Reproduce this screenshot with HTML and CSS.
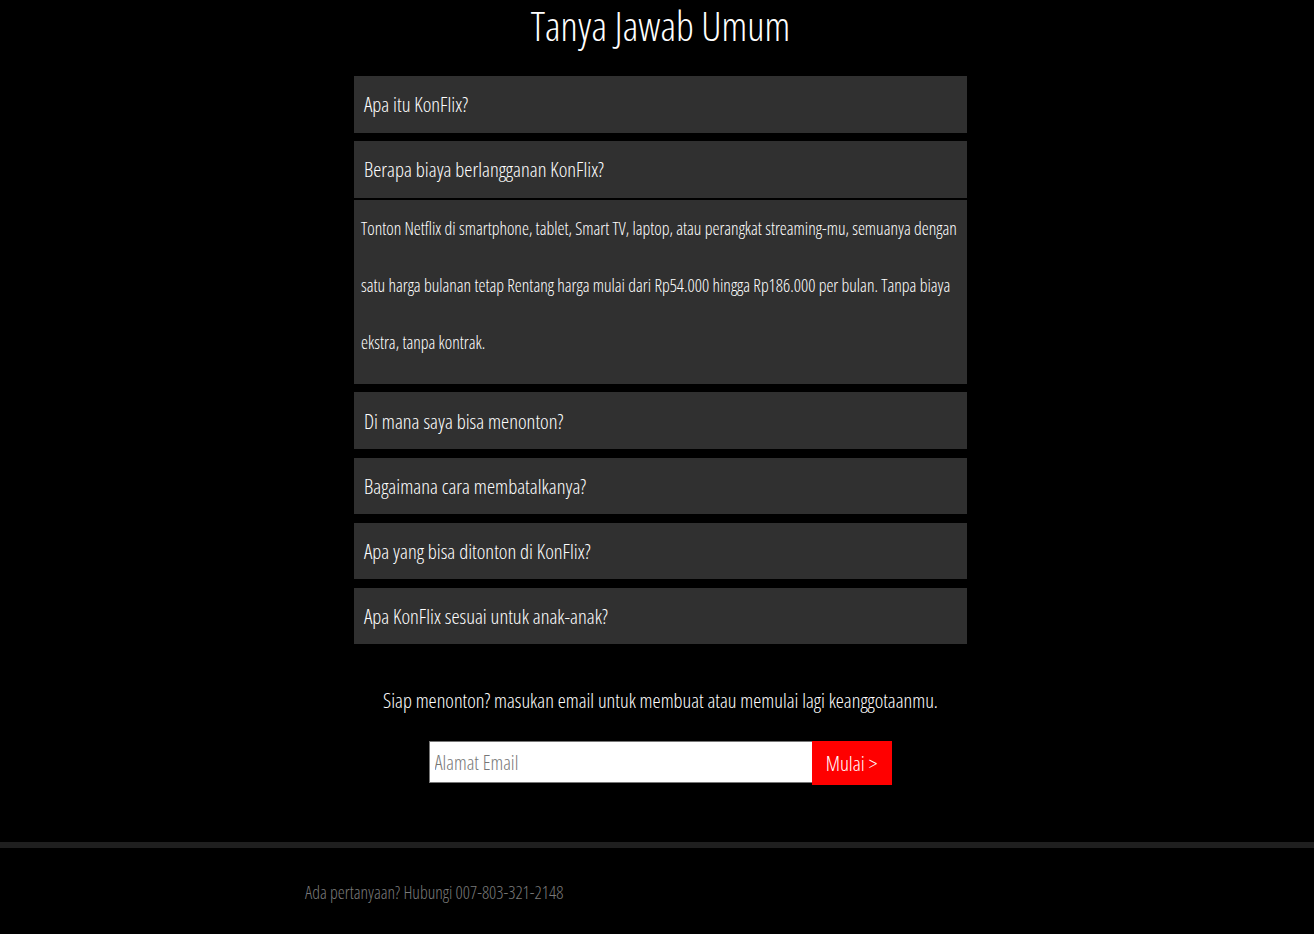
FILE: index.html
```html
<!DOCTYPE html>
<html lang="id">
<head>
<meta charset="utf-8">
<title>KonFlix - Tanya Jawab Umum</title>
<link rel="stylesheet" href="styles.css">
</head>
<body>
<section class="faq-section">
  <h1 class="faq-title">Tanya Jawab Umum</h1>
  <ul class="faq-list">
    <li class="faq-item"><div class="faq-q">Apa itu KonFlix?</div></li>
    <li class="faq-item open">
      <div class="faq-q">Berapa biaya berlangganan KonFlix?</div>
      <div class="faq-a">Tonton Netflix di smartphone, tablet, Smart TV, laptop, atau perangkat streaming-mu, semuanya dengan satu harga bulanan tetap Rentang harga mulai dari Rp54.000 hingga Rp186.000 per bulan. Tanpa biaya ekstra, tanpa kontrak.</div>
    </li>
    <li class="faq-item"><div class="faq-q">Di mana saya bisa menonton?</div></li>
    <li class="faq-item"><div class="faq-q">Bagaimana cara membatalkanya?</div></li>
    <li class="faq-item"><div class="faq-q">Apa yang bisa ditonton di KonFlix?</div></li>
    <li class="faq-item"><div class="faq-q">Apa KonFlix sesuai untuk anak-anak?</div></li>
  </ul>
  <p class="cta-text">Siap menonton? masukan email untuk membuat atau memulai lagi keanggotaanmu.</p>
  <form class="cta-form">
    <input class="cta-input" type="email" placeholder="Alamat Email">
    <button class="cta-btn" type="button">Mulai &gt;</button>
  </form>
</section>
<footer class="site-footer">
  <p class="footer-text">Ada pertanyaan? Hubungi 007-803-321-2148</p>
</footer>
</body>
</html>
```

FILE: styles.css
```css
html, body {
  margin: 0;
  padding: 0;
  background: #000;
  color: #fff;
  font-family: "Open Sans", "DejaVu Sans", sans-serif;
  font-stretch: 75%;
  font-weight: 350;
}

.faq-section {
  padding: 0 0 0 7px;
}

.faq-title {
  margin: 0;
  text-align: center;
  font-size: 40.5px;
  font-weight: 300;
  line-height: 52px;
}

.faq-list {
  list-style: none;
  width: 613px;
  margin: 24px auto 0;
  padding: 0;
  display: flex;
  flex-direction: column;
  gap: 8.7px;
}

.faq-item {
  display: flex;
  flex-direction: column;
  gap: 2px;
}

.faq-q {
  height: 56.5px;
  display: flex;
  align-items: center;
  padding-left: 10px;
  background: #303030;
  font-size: 20.6px;
}

.faq-a {
  background: #303030;
  padding: 0 7px 13px;
  font-size: 17.7px;
  line-height: 57px;
}

.cta-text {
  margin: 42px 0 0;
  text-align: center;
  font-size: 20.4px;
  line-height: 28px;
}

.cta-form {
  display: flex;
  justify-content: center;
  margin: 27px 0 0 -1px;
}

.cta-input {
  width: 383px;
  height: 42px;
  box-sizing: border-box;
  border: 1px solid #777;
  border-right: none;
  padding: 0 5px;
  font-family: inherit;
  font-stretch: 75%;
  font-weight: 350;
  font-size: 20px;
  color: #333;
  background: #fff;
  outline: none;
}

.cta-input::placeholder {
  color: #777;
}

.cta-btn {
  width: 80px;
  height: 44px;
  border: none;
  background: #ff0000;
  color: #fff;
  font-family: inherit;
  font-stretch: 75%;
  font-weight: 350;
  font-size: 21px;
  padding: 0;
}

.site-footer {
  margin-top: 57px;
  border-top: 6px solid #1f1f1f;
  padding: 31px 0 30px 305px;
}

.footer-text {
  margin: 0;
  color: #7a7a7a;
  font-size: 17.7px;
  line-height: 26px;
}
```
